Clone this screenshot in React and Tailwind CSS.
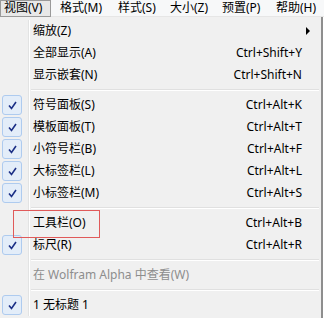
import React from 'react';

const font = "font-['Noto_Sans','Noto_Sans_CJK_SC',sans-serif]";

const menus = [
  { label: '视图(V)', w: 'w-[60px]' },
  { label: '格式(M)', w: 'w-[58px]' },
  { label: '样式(S)', w: 'w-[52px]' },
  { label: '大小(Z)', w: 'w-[52px]' },
  { label: '预置(P)', w: 'w-[54px]' },
  { label: '帮助(H)', w: 'w-[48px]' },
];

const items = [
  { label: '缩放(Z)', sub: true },
  { label: '全部显示(A)', key: 'Ctrl+Shift+Y' },
  { label: '显示嵌套(N)', key: 'Ctrl+Shift+N' },
  { sep: true },
  { label: '符号面板(S)', key: 'Ctrl+Alt+K', checked: true },
  { label: '模板面板(T)', key: 'Ctrl+Alt+T', checked: true },
  { label: '小符号栏(B)', key: 'Ctrl+Alt+F', checked: true },
  { label: '大标签栏(L)', key: 'Ctrl+Alt+L', checked: true },
  { label: '小标签栏(M)', key: 'Ctrl+Alt+S', checked: true },
  { sep: true },
  { label: '工具栏(O)', key: 'Ctrl+Alt+B' },
  { label: '标尺(R)', key: 'Ctrl+Alt+R', checked: true },
  { sep: true },
  { label: '在 Wolfram Alpha 中查看(W)', disabled: true },
  { sep: true },
  { label: '1 无标题 1', checked: true },
];

function Check() {
  return (
    <div className="w-[20px] h-[20px] ml-[2px] rounded-[3px] border border-[#aecbef] bg-[#e3edf9] flex items-center justify-center">
      <svg width="9" height="9" viewBox="0 0 9 9">
        <path d="M1 4.5 L3.5 7.5 L8 1" fill="none" stroke="#1b2f86" strokeWidth="1.6" />
      </svg>
    </div>
  );
}

function Gutter({ children }) {
  return (
    <div className="w-[30px] self-stretch flex items-center border-r border-r-white">
      <div className="w-[29px] self-stretch flex items-center border-r border-r-[#e2e3e3]">{children}</div>
    </div>
  );
}

export default function App() {
  return (
    <div className={`w-[324px] h-[318px] bg-white overflow-hidden text-[12px] text-black ${font}`}>
      {/* menu bar */}
      <div className="h-[17px] flex items-center bg-[#f7f8f9] border-b border-[#e6e6e6] whitespace-nowrap">
        {menus.map((m, i) => (
          <div key={m.label} className={`${m.w} shrink-0 h-[17px] flex items-center`}>
            {i === 0 ? (
              <div className="w-[51px] h-[17px] pl-[3px] flex items-center bg-[#e8e8e8] border border-[#9a9a9a] leading-none">
                {m.label}
              </div>
            ) : (
              <span className="leading-none">{m.label}</span>
            )}
          </div>
        ))}
      </div>

      {/* dropdown */}
      <div className="relative w-[323px] h-[301px] bg-[#f0f0f0] border-r-2 border-[#8e8e8e] pt-[3px] whitespace-nowrap">
        {items.map((it, i) =>
          it.sep ? (
            <div key={i} className="h-[8px] flex items-center">
              <Gutter />
              <div className="flex-1 ml-[1px] mr-[2px] h-[2px] border-t border-[#e0e0e0] border-b border-b-white" />
            </div>
          ) : (
            <div key={i} className="h-[22px] flex items-center">
              <Gutter>{it.checked && <Check />}</Gutter>
              <div className={`flex-1 pl-[3px] leading-none ${it.disabled ? 'text-[#8d8d8d]' : ''}`}>{it.label}</div>
              {it.key && <div className="pr-[19px] leading-none">{it.key}</div>}
              {it.sub && (
                <svg width="5" height="8" viewBox="0 0 5 8" className="mr-[10px]">
                  <path d="M0 0 L4 4 L0 8 Z" fill="#000" />
                </svg>
              )}
            </div>
          )
        )}
        {/* highlight box */}
        <div className="absolute left-[13px] top-[193px] w-[87px] h-[28px] border border-[#e05a5a]" />
      </div>
    </div>
  );
}
